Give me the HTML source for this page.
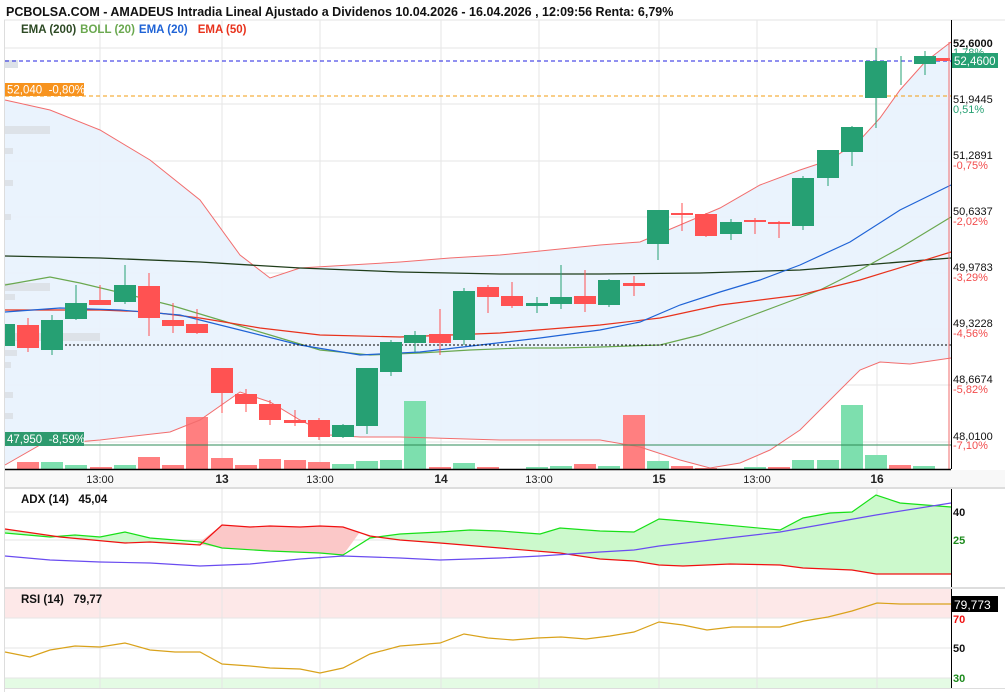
<!DOCTYPE html>
<html><head><meta charset="utf-8"><style>
body{margin:0;background:#fff;width:1005px;height:692px;overflow:hidden;font-family:"Liberation Sans",sans-serif}
svg{display:block}
text{font-family:"Liberation Sans",sans-serif;white-space:pre}
</style></head><body>
<svg width="1005" height="692" viewBox="0 0 1005 692" xmlns="http://www.w3.org/2000/svg">
<rect width="1005" height="692" fill="#fff"/>
<text x="6" y="16" font-size="12.5" font-weight="bold" fill="#111">PCBOLSA.COM - AMADEUS Intradia Lineal Ajustado a Dividenos 10.04.2026 - 16.04.2026 , 12:09:56 Renta: 6,79%</text>
<line x1="4" y1="20" x2="1005" y2="20" stroke="#e3e3e3"/>
<line x1="4.5" y1="20" x2="4.5" y2="692" stroke="#ddd"/>
<g stroke="#e6e6e6" stroke-width="1">
<line x1="100" y1="20" x2="100" y2="469"/><line x1="222" y1="20" x2="222" y2="469"/><line x1="320" y1="20" x2="320" y2="469"/><line x1="441" y1="20" x2="441" y2="469"/><line x1="539" y1="20" x2="539" y2="469"/><line x1="659" y1="20" x2="659" y2="469"/><line x1="757" y1="20" x2="757" y2="469"/><line x1="877" y1="20" x2="877" y2="469"/>
<line x1="5" y1="48" x2="951" y2="48"/><line x1="5" y1="104" x2="951" y2="104"/><line x1="5" y1="161" x2="951" y2="161"/><line x1="5" y1="217" x2="951" y2="217"/><line x1="5" y1="273" x2="951" y2="273"/><line x1="5" y1="329" x2="951" y2="329"/><line x1="5" y1="385" x2="951" y2="385"/><line x1="5" y1="442" x2="951" y2="442"/>
</g>
<polygon fill="#e9f2fd" opacity="0.95" points="5,100 50,110 100,130 150,160 200,200 240,255 270,278 300,268 350,265 400,262 450,258 500,255 550,250 600,245 640,242 680,225 720,208 760,185 800,170 830,160 860,140 880,118 900,90 925,62 951,42 951,358 910,364 880,362 860,370 830,400 800,430 770,450 740,463 710,468 680,460 640,447 600,440 500,440 400,437 360,437 330,435 300,420 270,402 240,392 200,420 170,432 100,440 40,445 5,465"/>
<g fill="#dde2e8">
<rect x="5" y="60" width="13" height="8"/><rect x="5" y="126" width="45" height="8"/><rect x="5" y="148" width="8" height="6"/><rect x="5" y="180" width="8" height="6"/><rect x="5" y="214" width="6" height="6"/><rect x="5" y="283" width="45" height="8"/><rect x="5" y="294" width="10" height="6"/><rect x="5" y="333" width="95" height="8"/><rect x="5" y="350" width="12" height="6"/><rect x="5" y="362" width="6" height="6"/><rect x="5" y="392" width="8" height="6"/><rect x="5" y="413" width="8" height="6"/>
</g>
<g fill="#ff7f80">
<rect x="17" y="462" width="22" height="7"/><rect x="90" y="467" width="22" height="2"/><rect x="138" y="457" width="22" height="12"/><rect x="162" y="465" width="22" height="4"/><rect x="186" y="417" width="22" height="52"/><rect x="211" y="458" width="22" height="11"/><rect x="235" y="465" width="22" height="4"/><rect x="259" y="459" width="22" height="10"/><rect x="284" y="460" width="22" height="9"/><rect x="308" y="462" width="22" height="7"/><rect x="429" y="467" width="22" height="2"/><rect x="477" y="467" width="22" height="2"/><rect x="574" y="464" width="22" height="5"/><rect x="623" y="415" width="22" height="54"/><rect x="671" y="466" width="22" height="3"/><rect x="695" y="468" width="22" height="1"/><rect x="768" y="467" width="22" height="2"/><rect x="889" y="465" width="22" height="4"/>
</g>
<g fill="#7ddfae">
<rect x="41" y="462" width="22" height="7"/><rect x="65" y="465" width="22" height="4"/><rect x="114" y="465" width="22" height="4"/><rect x="332" y="464" width="22" height="5"/><rect x="356" y="461" width="22" height="8"/><rect x="380" y="460" width="22" height="9"/><rect x="404" y="401" width="22" height="68"/><rect x="453" y="463" width="22" height="6"/><rect x="526" y="467" width="22" height="2"/><rect x="550" y="466" width="22" height="3"/><rect x="598" y="466" width="22" height="3"/><rect x="647" y="461" width="22" height="8"/><rect x="744" y="467" width="22" height="2"/><rect x="792" y="460" width="22" height="9"/><rect x="817" y="460" width="22" height="9"/><rect x="841" y="405" width="22" height="64"/><rect x="865" y="455" width="22" height="14"/><rect x="913" y="466" width="22" height="3"/>
</g>
<polyline fill="none" stroke="#f26d6d" stroke-width="1" points="5,100 50,110 100,130 150,160 200,200 240,255 270,278 300,268 350,265 400,262 450,258 500,255 550,250 600,245 640,242 680,225 720,208 760,185 800,170 830,160 860,140 880,118 900,90 925,62 951,42"/>
<polyline fill="none" stroke="#f26d6d" stroke-width="1" points="5,465 40,445 100,440 170,432 200,420 240,392 270,402 300,420 330,435 360,437 400,437 500,440 600,440 640,447 680,460 710,468 740,463 770,450 800,430 830,400 860,370 880,362 910,364 951,358"/>
<polyline fill="none" stroke="#1f3d1a" stroke-width="1.3" points="5,256 100,258 200,262 300,268 400,272 500,274 600,274 700,273 800,270 951,258"/>
<polyline fill="none" stroke="#6aa84f" stroke-width="1.2" points="5,285 50,277 80,283 130,295 170,305 220,320 270,335 320,350 370,355 420,353 470,350 520,348 560,348 600,347 660,345 700,335 740,320 780,305 820,290 860,270 900,248 951,217"/>
<polyline fill="none" stroke="#e8321c" stroke-width="1.2" points="5,310 100,310 150,312 200,318 260,328 320,335 400,337 500,333 600,325 660,318 720,305 800,295 860,280 951,252"/>
<polyline fill="none" stroke="#1f63d6" stroke-width="1.2" points="5,312 60,308 120,310 180,315 240,330 300,345 360,355 420,352 480,345 540,338 600,330 640,322 680,305 720,292 760,280 800,265 850,242 900,210 951,185"/>
<line x1="5" y1="61" x2="951" y2="61" stroke="#2020e0" stroke-dasharray="4,3"/>
<line x1="5" y1="96" x2="951" y2="96" stroke="#f39c12" stroke-dasharray="4,3"/>
<line x1="5" y1="345" x2="951" y2="345" stroke="#000" stroke-dasharray="2,2"/>
<line x1="5" y1="445" x2="951" y2="445" stroke="#2e8b57"/>
<g stroke="#26a073" fill="#26a073">
<rect x="5" y="324" width="10" height="22" stroke="none"/>
<line x1="52" y1="315" x2="52" y2="355"/><rect x="41" y="320" width="22" height="30" stroke="none"/>
<line x1="76" y1="285" x2="76" y2="320"/><rect x="65" y="303" width="22" height="16" stroke="none"/>
<line x1="125" y1="265" x2="125" y2="304"/><rect x="114" y="285" width="22" height="17" stroke="none"/>
<line x1="343" y1="424" x2="343" y2="438"/><rect x="332" y="425" width="22" height="12" stroke="none"/>
<line x1="367" y1="368" x2="367" y2="434"/><rect x="356" y="368" width="22" height="58" stroke="none"/>
<line x1="391" y1="340" x2="391" y2="376"/><rect x="380" y="342" width="22" height="30" stroke="none"/>
<line x1="415" y1="331" x2="415" y2="352"/><rect x="404" y="335" width="22" height="8" stroke="none"/>
<line x1="464" y1="288" x2="464" y2="345"/><rect x="453" y="291" width="22" height="49" stroke="none"/>
<line x1="537" y1="297" x2="537" y2="313"/><rect x="526" y="303" width="22" height="3" stroke="none"/>
<line x1="561" y1="265" x2="561" y2="309"/><rect x="550" y="297" width="22" height="7" stroke="none"/>
<line x1="609" y1="279" x2="609" y2="307"/><rect x="598" y="280" width="22" height="25" stroke="none"/>
<line x1="658" y1="210" x2="658" y2="260"/><rect x="647" y="210" width="22" height="34" stroke="none"/>
<line x1="731" y1="219" x2="731" y2="240"/><rect x="720" y="222" width="22" height="12" stroke="none"/>
<line x1="803" y1="176" x2="803" y2="230"/><rect x="792" y="178" width="22" height="48" stroke="none"/>
<line x1="828" y1="150" x2="828" y2="186"/><rect x="817" y="150" width="22" height="28" stroke="none"/>
<line x1="852" y1="126" x2="852" y2="166"/><rect x="841" y="127" width="22" height="25" stroke="none"/>
<line x1="876" y1="48" x2="876" y2="128"/><rect x="865" y="61" width="22" height="37" stroke="none"/>
<line x1="901" y1="56" x2="901" y2="85"/>
<line x1="925" y1="51" x2="925" y2="75"/><rect x="914" y="56" width="22" height="8" stroke="none"/>
</g>
<g stroke="#ff5252" fill="#ff5252">
<line x1="28" y1="318" x2="28" y2="352"/><rect x="17" y="325" width="22" height="23" stroke="none"/>
<line x1="100" y1="285" x2="100" y2="305"/><rect x="89" y="300" width="22" height="5" stroke="none"/>
<line x1="149" y1="273" x2="149" y2="336"/><rect x="138" y="286" width="22" height="32" stroke="none"/>
<line x1="173" y1="303" x2="173" y2="333"/><rect x="162" y="320" width="22" height="6" stroke="none"/>
<line x1="197" y1="309" x2="197" y2="334"/><rect x="186" y="324" width="22" height="9" stroke="none"/>
<line x1="222" y1="368" x2="222" y2="413"/><rect x="211" y="368" width="22" height="25" stroke="none"/>
<line x1="246" y1="389" x2="246" y2="412"/><rect x="235" y="394" width="22" height="10" stroke="none"/>
<line x1="270" y1="400" x2="270" y2="425"/><rect x="259" y="404" width="22" height="16" stroke="none"/>
<line x1="295" y1="410" x2="295" y2="426"/><rect x="284" y="420" width="22" height="3" stroke="none"/>
<line x1="319" y1="418" x2="319" y2="440"/><rect x="308" y="420" width="22" height="17" stroke="none"/>
<line x1="440" y1="309" x2="440" y2="355"/><rect x="429" y="334" width="22" height="9" stroke="none"/>
<line x1="488" y1="285" x2="488" y2="313"/><rect x="477" y="287" width="22" height="10" stroke="none"/>
<line x1="512" y1="282" x2="512" y2="308"/><rect x="501" y="296" width="22" height="10" stroke="none"/>
<line x1="585" y1="270" x2="585" y2="312"/><rect x="574" y="296" width="22" height="8" stroke="none"/>
<line x1="634" y1="276" x2="634" y2="296"/><rect x="623" y="283" width="22" height="3" stroke="none"/>
<line x1="682" y1="203" x2="682" y2="231"/><rect x="671" y="213" width="22" height="2" stroke="none"/>
<line x1="706" y1="213" x2="706" y2="237"/><rect x="695" y="214" width="22" height="22" stroke="none"/>
<line x1="755" y1="218" x2="755" y2="234"/><rect x="744" y="220" width="22" height="2" stroke="none"/>
<line x1="779" y1="221" x2="779" y2="238"/><rect x="768" y="222" width="22" height="2" stroke="none"/>
<rect x="936" y="58" width="14" height="3" stroke="none"/>
</g>
<text x="21" y="33" font-size="11.5" font-weight="bold"><tspan fill="#2d4a24">EMA (200)</tspan><tspan fill="#6aa84f" dx="4">BOLL (20)</tspan><tspan fill="#1f63d6" dx="4">EMA (20)</tspan><tspan fill="#e8321c" dx="10">EMA (50)</tspan></text>
<rect x="5" y="83" width="79" height="13" fill="#f7931e"/><text x="7" y="93.5" font-size="11.5" fill="#fff">52,040  -0,80%</text>
<rect x="5" y="432" width="79" height="14" fill="#2e9a6e"/><text x="7" y="443" font-size="11.5" fill="#fff">47,950  -8,59%</text>
<line x1="951.5" y1="20" x2="951.5" y2="469" stroke="#000"/>
<line x1="949" y1="42" x2="949" y2="469" stroke="#f26d6d"/>
<g font-size="11" fill="#111">
<text x="953" y="47" font-weight="bold">52,6000</text>
<text x="953" y="103">51,9445</text>
<text x="953" y="159">51,2891</text>
<text x="953" y="215">50,6337</text>
<text x="953" y="271">49,9783</text>
<text x="953" y="327">49,3228</text>
<text x="953" y="383">48,6674</text>
<text x="953" y="440">48,0100</text>
</g>
<g font-size="11">
<text x="953" y="56" fill="#26a073">1,78%</text>
<text x="953" y="113" fill="#26a073">0,51%</text>
<text x="953" y="169" fill="#f24c4c">-0,75%</text>
<text x="953" y="225" fill="#f24c4c">-2,02%</text>
<text x="953" y="281" fill="#f24c4c">-3,29%</text>
<text x="953" y="337" fill="#f24c4c">-4,56%</text>
<text x="953" y="393" fill="#f24c4c">-5,82%</text>
<text x="953" y="449" fill="#f24c4c">-7,10%</text>
</g>
<rect x="952" y="53" width="46" height="15" fill="#26a073"/><text x="954" y="65" font-size="11.5" fill="#fff">52,4600</text>
<rect x="5" y="470" width="1000" height="18" fill="#f8f8f8"/>
<line x1="5" y1="469.5" x2="951" y2="469.5" stroke="#000" stroke-width="1.5"/>
<g font-size="11" fill="#222" text-anchor="middle">
<text x="100" y="483">13:00</text><text x="222" y="483" font-weight="bold" font-size="12">13</text><text x="320" y="483">13:00</text><text x="441" y="483" font-weight="bold" font-size="12">14</text><text x="539" y="483">13:00</text><text x="659" y="483" font-weight="bold" font-size="12">15</text><text x="757" y="483">13:00</text><text x="877" y="483" font-weight="bold" font-size="12">16</text>
</g>
<line x1="5" y1="488" x2="1005" y2="488" stroke="#ddd" stroke-width="2"/>
<g stroke="#e6e6e6">
<line x1="100" y1="489" x2="100" y2="587"/><line x1="222" y1="489" x2="222" y2="587"/><line x1="320" y1="489" x2="320" y2="587"/><line x1="441" y1="489" x2="441" y2="587"/><line x1="539" y1="489" x2="539" y2="587"/><line x1="659" y1="489" x2="659" y2="587"/><line x1="757" y1="489" x2="757" y2="587"/><line x1="877" y1="489" x2="877" y2="587"/>
<line x1="5" y1="512" x2="951" y2="512"/><line x1="5" y1="540" x2="951" y2="540"/>
</g>
<polygon fill="#ccf9cc" points="5,533 50,537 75,535 100,537 125,532 150,538 197,544 150,542 125,543 60,537 5,529"/>
<polygon fill="#fbc8c8" points="197,544 222,525 250,527 270,526 300,527 320,526 343,527 360,532 343,555 320,553 270,551 222,548"/>
<polygon fill="#ccf9cc" points="360,532 370,538 400,534 440,532 470,530 500,531 540,534 560,528 600,531 634,532 659,519 683,521 780,530 803,518 830,513 852,512 876,495 900,503 951,507 951,574 876,574 852,570 803,568 780,565 730,564 683,566 659,565 634,561 600,559 560,553 500,548 440,543 400,540 370,536"/>
<polyline fill="none" stroke="#18e018" stroke-width="1.2" points="5,533 50,537 75,535 100,537 125,532 150,538 200,542 222,548 270,551 320,553 343,555 370,538 400,534 440,532 470,530 500,531 540,534 560,528 600,531 634,532 659,519 683,521 780,530 803,518 830,513 852,512 876,495 900,503 951,507"/>
<polyline fill="none" stroke="#f01010" stroke-width="1.2" points="5,529 60,537 125,543 150,542 200,545 222,525 250,527 270,526 300,527 320,526 343,527 370,536 400,540 440,543 500,548 560,553 600,559 634,561 659,565 683,566 730,564 780,565 803,568 852,570 876,574 951,574"/>
<polyline fill="none" stroke="#6a4cf0" stroke-width="1.2" points="5,556 50,560 100,562 150,563 200,566 250,564 300,559 343,556 400,558 440,560 500,558 540,556 600,552 634,550 659,546 780,532 876,515 951,503"/>
<text x="21" y="503" font-size="11.5" font-weight="bold" fill="#111">ADX (14)   45,04</text>
<line x1="951.5" y1="489" x2="951.5" y2="587" stroke="#000"/>
<text x="953" y="516" font-size="11" font-weight="bold" fill="#111">40</text>
<text x="953" y="544" font-size="11" font-weight="bold" fill="#1c8a1c">25</text>
<line x1="5" y1="588" x2="1005" y2="588" stroke="#ddd" stroke-width="2"/>
<rect x="5" y="589" width="946" height="29" fill="#fde8e8"/>
<rect x="5" y="678" width="946" height="10" fill="#e4fbe4"/>
<g stroke="#e6e6e6">
<line x1="100" y1="589" x2="100" y2="688"/><line x1="222" y1="589" x2="222" y2="688"/><line x1="320" y1="589" x2="320" y2="688"/><line x1="441" y1="589" x2="441" y2="688"/><line x1="539" y1="589" x2="539" y2="688"/><line x1="659" y1="589" x2="659" y2="688"/><line x1="757" y1="589" x2="757" y2="688"/><line x1="877" y1="589" x2="877" y2="688"/>
<line x1="5" y1="618" x2="951" y2="618"/><line x1="5" y1="648" x2="951" y2="648"/><line x1="5" y1="678" x2="951" y2="678"/>
</g>
<polyline fill="none" stroke="#d9a21b" stroke-width="1.2" points="5,652 30,657 50,650 75,646 100,647 125,643 150,650 175,652 200,652 222,664 250,666 270,668 300,669 320,673 343,668 370,654 400,646 440,643 464,634 488,638 513,640 537,638 561,637 586,639 610,636 634,632 659,622 683,625 707,630 732,627 756,627 780,627 804,621 828,617 852,611 877,603 900,604 951,604"/>
<text x="21" y="603" font-size="11.5" font-weight="bold" fill="#111">RSI (14)   79,77</text>
<line x1="951.5" y1="589" x2="951.5" y2="688" stroke="#000"/>
<rect x="952" y="596" width="46" height="16" fill="#000"/><text x="954" y="609" font-size="12" fill="#fff">79,773</text>
<text x="953" y="623" font-size="11" font-weight="bold" fill="#f01010">70</text>
<text x="953" y="652" font-size="11" font-weight="bold" fill="#111">50</text>
<text x="953" y="682" font-size="11" font-weight="bold" fill="#1c8a1c">30</text>
<line x1="5" y1="688.5" x2="1005" y2="688.5" stroke="#ddd"/>
</svg>
</body></html>
